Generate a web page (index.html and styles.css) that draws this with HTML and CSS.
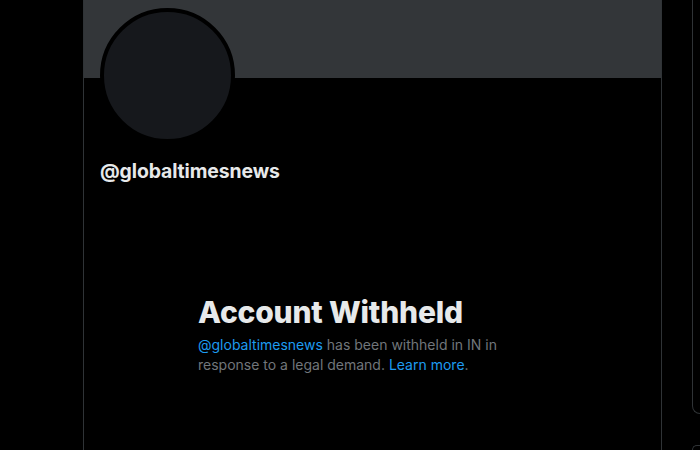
FILE: index.html
```html
<!DOCTYPE html>
<html>
<head>
<meta charset="utf-8">
<link rel="stylesheet" href="styles.css">
</head>
<body>
<div class="layout">
  <div class="nav-space"></div>
  <main class="column">
    <div class="banner"></div>
    <div class="profile">
      <div class="avatar"></div>
      <div class="handle">@globaltimesnews</div>
    </div>
    <section class="withheld">
      <h1 class="title">Account Withheld</h1>
      <p class="desc"><a class="link">@globaltimesnews</a> has been withheld in IN in response to a legal demand. <a class="link">Learn more</a>.</p>
    </section>
  </main>
  <aside class="sidebar">
    <div class="card card-top"></div>
    <div class="card card-next"></div>
  </aside>
</div>
</body>
</html>
```
FILE: styles.css
```css
* { box-sizing: border-box; }
html, body { margin: 0; padding: 0; background: #000; height: 100%; overflow: hidden; }
body { font-family: Inter, "Noto Sans", sans-serif; color: #e7e9ea; }
.layout { display: flex; height: 450px; overflow: hidden; }
.nav-space { width: 83px; flex: none; }
.column {
  width: 579px; flex: none;
  border-left: 1px solid #2f3336;
  border-right: 1px solid #2f3336;
  display: flex; flex-direction: column;
}
.banner { height: 78px; background: #333639; flex: none; }
.profile { padding: 0 16px; margin-top: -70px; }
.avatar {
  width: 135px; height: 135px; border-radius: 50%;
  background: #16181c; border: 4px solid #000;
}
.handle {
  margin-top: 16px; line-height: 24px;
  font-size: 19.4px; font-weight: 700; color: #e7e9ea; letter-spacing: -0.1px;
}
.withheld { margin: 111px 0 0 114px; width: 310px; }
.title {
  margin: 0; font-size: 30px; font-weight: 800; line-height: 36px; color: #e7e9ea; letter-spacing: -0.2px;
}
.desc {
  margin: 5px 0 0; font-size: 14px; line-height: 20px; color: #71767b;
}
.link { color: #1d9bf0; text-decoration: none; }
.sidebar { margin-left: 30px; flex: 1; display: flex; flex-direction: column; }
.card { border: 1px solid #2f3336; border-right: none; flex: none; }
.card-top { margin-top: -20px; height: 434px; border-radius: 0 0 0 16px; }
.card-next { margin-top: 31px; height: 5px; border-bottom: none; border-radius: 16px 0 0 0; }
```
